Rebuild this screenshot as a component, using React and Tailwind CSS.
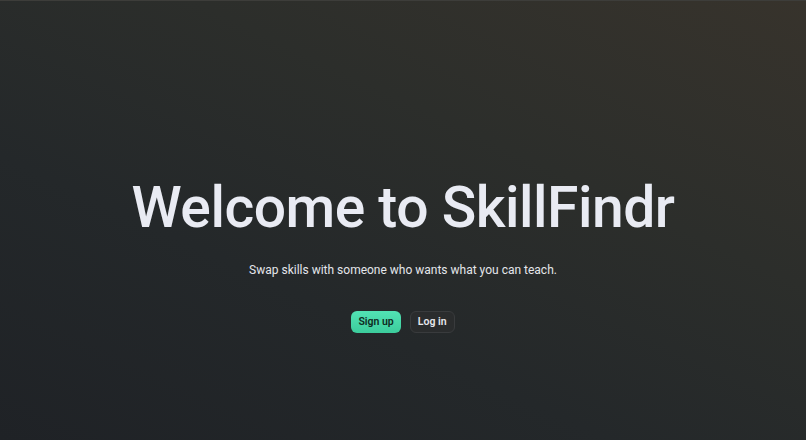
export default function App() {
  return (
    <div
      className="relative h-[440px] w-full overflow-hidden bg-[linear-gradient(205deg,#37332c_0%,#2c2e2b_35%,#24282a_65%,#1f2226_100%)] border-t border-[#3d3d3a]"
      style={{ fontFamily: 'Roboto, "Noto Sans", sans-serif' }}
    >
      <div className="flex flex-col items-center pt-[176px]">
        <h1 className="text-[57px] leading-[62px] font-medium tracking-[-0.5px] text-[#e9ebf3]">
          Welcome to SkillFindr
        </h1>
        <p className="mt-[21px] text-[12px] leading-[20px] text-[#e4e6ea]">
          Swap skills with someone who wants what you can teach.
        </p>
        <div className="mt-[31px] flex gap-[9px]">
          <button className="h-[22px] px-[7px] rounded-[6px] bg-[linear-gradient(180deg,#52e3b4,#3ccc9c)] text-[10.5px] font-semibold text-[#0e2a21]">
            Sign up
          </button>
          <button className="h-[22px] px-[7px] rounded-[6px] bg-[#2a2c2d] border border-[#393b3d] text-[10.5px] font-semibold text-[#e6e8ec]">
            Log in
          </button>
        </div>
      </div>
    </div>
  );
}
